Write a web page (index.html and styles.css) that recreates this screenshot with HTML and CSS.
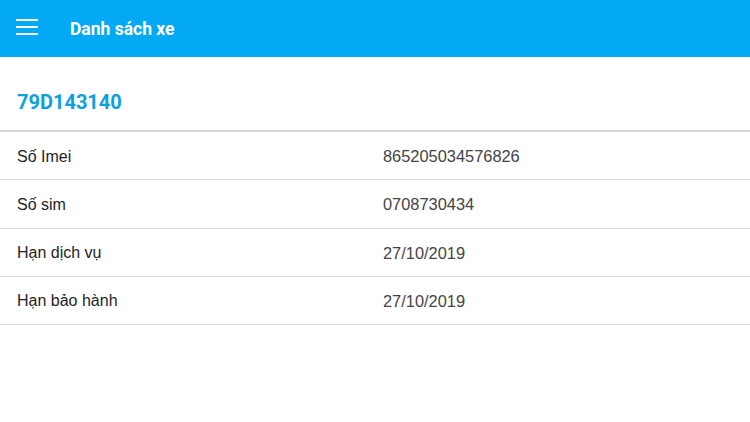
FILE: index.html
```html
<!DOCTYPE html>
<html lang="vi">
<head>
<meta charset="utf-8">
<title>Danh sách xe</title>
<link rel="stylesheet" href="styles.css">
</head>
<body>
<header class="appbar">
  <svg class="menu" width="22" height="18" viewBox="0 0 22 18" aria-hidden="true">
    <rect x="0" y="1" width="22" height="2" fill="#fff"/>
    <rect x="0" y="8" width="22" height="2" fill="#fff"/>
    <rect x="0" y="15" width="22" height="2" fill="#fff"/>
  </svg>
  <h1 class="title">Danh sách xe</h1>
</header>
<main>
  <div class="plate">79D143140</div>
  <div class="list">
    <div class="row"><span class="label">Số Imei</span><span class="value">865205034576826</span></div>
    <div class="row"><span class="label">Số sim</span><span class="value">0708730434</span></div>
    <div class="row"><span class="label">Hạn dịch vụ</span><span class="value">27/10/2019</span></div>
    <div class="row"><span class="label">Hạn bảo hành</span><span class="value">27/10/2019</span></div>
  </div>
</main>
</body>
</html>
```
FILE: styles.css
```css
html, body {
  margin: 0;
  padding: 0;
  background: #fff;
  font-family: Roboto, "Liberation Sans", Arial, sans-serif;
}
.appbar {
  height: 57px;
  background: #03a9f4;
  display: flex;
  align-items: center;
  padding-left: 16px;
  box-sizing: border-box;
}
.menu {
  display: block;
  margin-top: -3px;
}
.title {
  margin: 0 0 0 32px;
  color: #fff;
  font-size: 17.5px;
  font-weight: 700;
}
.plate {
  height: 73px;
  box-sizing: border-box;
  display: flex;
  align-items: center;
  padding: 16px 0 0 17px;
  color: #0ba0e0;
  font-size: 20px;
  font-weight: 700;
}
.list {
  border-top: 2px solid #d6d6d6;
}
.row {
  display: grid;
  grid-template-columns: 366px 1fr;
  align-items: center;
  height: 48.25px;
  box-sizing: border-box;
  padding: 2px 0 0 17px;
  border-bottom: 1px solid #dcdcdc;
  font-family: "Liberation Sans", Arial, sans-serif;
  font-size: 16px;
  color: #1e1e1e;
}
.value {
  color: #444;
  font-size: 16.4px;
}
```
